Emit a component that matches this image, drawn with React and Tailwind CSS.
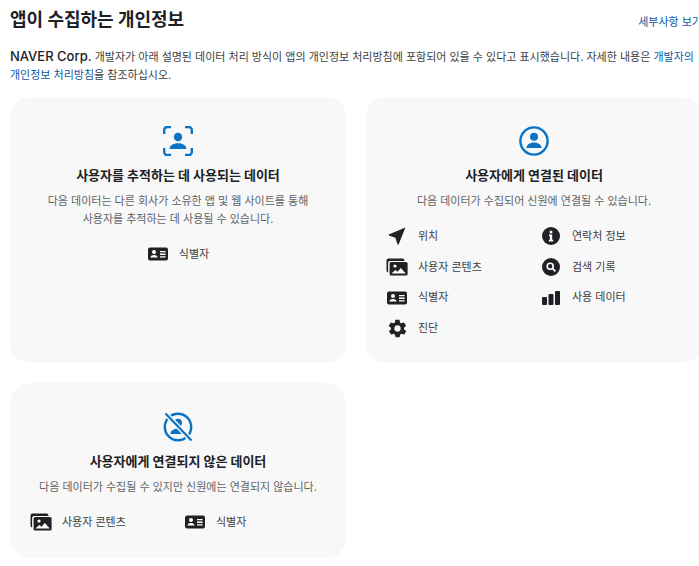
import React from 'react';

const ink = '#202124';
const blue = '#0b73c4';

function IdIcon() {
  return (
    <svg width="22" height="16" viewBox="0 0 22 16">
      <rect x="1" y="1.5" width="20" height="13" rx="2" fill={ink} />
      <circle cx="7" cy="6" r="2" fill="#fff" />
      <path d="M3.4 11.6c0-1.7 2-2.5 3.6-2.5s3.6.8 3.6 2.5z" fill="#fff" />
      <path d="M13 5h5.6v1.3H13zM13 7.6h5.6v1.3H13zM13 10.2h5.6v1.3H13z" fill="#fff" />
    </svg>
  );
}

function MediaIcon() {
  return (
    <svg width="22" height="18" viewBox="0 0 22 18">
      <path d="M2.5 0.5h14a2 2 0 0 1 2 2v.5H4a2 2 0 0 0-1.9 2v9.5A2 2 0 0 1 .5 12.500v-10a2 2 0 0 1 2-2z" fill={ink} />
      <rect x="3.6" y="4" width="18" height="13.6" rx="1.6" fill={ink} />
      <circle cx="9" cy="8" r="1.6" fill="#fff" />
      <path d="M5.4 15.6l4-3.6 2.2 1.8 3.2-3.8 5 5.6z" fill="#fff" />
    </svg>
  );
}

function NavIcon() {
  return (
    <svg width="18" height="18" viewBox="0 0 18 18">
      <path d="M17.4 0.6L0.8 7.6v1l6.6 2.2 2.2 6.6h1z" fill={ink} />
    </svg>
  );
}

function GearIcon() {
  return (
    <svg width="21" height="21" viewBox="0 0 24 24">
      <path
        d="M19.4 13c.1-.3.1-.7.1-1s0-.7-.1-1l2.100-1.600c.2-.2.3-.4.1-.7l-2-3.400c-.1-.2-.4-.3-.6-.2l-2.500 1c-.5-.4-1.100-.7-1.700-1l-.4-2.600c0-.3-.2-.4-.5-.4h-4c-.3 0-.5.2-.5.4l-.4 2.600c-.6.3-1.200.6-1.700 1l-2.500-1c-.2-.1-.5 0-.6.2l-2 3.400c-.1.3-.1.5.1.7L4.600 11c-.1.3-.1.7-.1 1s0 .7.1 1l-2.100 1.600c-.2.2-.3.4-.1.7l2 3.400c.1.2.4.3.6.2l2.500-1c.5.4 1.100.7 1.700 1l.4 2.600c0 .3.2.4.5.4h4c.3 0 .5-.2.5-.4l.4-2.600c.6-.3 1.200-.6 1.700-1l2.500 1c.2.1.5 0 .6-.2l2-3.400c.1-.3.1-.5-.1-.7zM12 15.600a3.600 3.600 0 1 1 0-7.200 3.600 3.600 0 0 1 0 7.200z"
        fill={ink}
      />
    </svg>
  );
}

function InfoIcon() {
  return (
    <svg width="18" height="18" viewBox="0 0 18 18">
      <circle cx="9" cy="9" r="9" fill={ink} />
      <circle cx="9" cy="5" r="1.5" fill="#fff" />
      <path d="M7 7.6h3.2v5.2h1v1.6H6.900v-1.600h1V9.200H7z" fill="#fff" />
    </svg>
  );
}

function SearchIcon() {
  return (
    <svg width="18" height="18" viewBox="0 0 18 18">
      <circle cx="9" cy="9" r="9" fill={ink} />
      <circle cx="8.2" cy="8.2" r="3" fill="none" stroke="#fff" strokeWidth="1.6" />
      <path d="M10.4 10.4l3 3" stroke="#fff" strokeWidth="1.8" />
    </svg>
  );
}

function BarsIcon() {
  return (
    <svg width="18" height="14" viewBox="0 0 18 14">
      <rect x="0" y="6" width="5" height="8" rx="1" fill={ink} />
      <rect x="6.5" y="3" width="5" height="11" rx="1" fill={ink} />
      <rect x="13" y="0" width="5" height="14" rx="1" fill={ink} />
    </svg>
  );
}

function TrackIcon() {
  return (
    <svg width="30" height="30" viewBox="0 0 30 30" fill="none">
      <path
        d="M1.2 8V4a3 3 0 0 1 3-3H8M22 1h3.800a3 3 0 0 1 3 3v4M28.800 22v4a3 3 0 0 1-3 3H22M8 29H4.200a3 3 0 0 1-3-3v-4"
        stroke={blue}
        strokeWidth="2.4"
      />
      <circle cx="15" cy="11" r="4.200" fill={blue} />
      <path d="M6.600 23c0-4.200 5-5.800 8.400-5.800s8.400 1.600 8.400 5.800z" fill={blue} />
    </svg>
  );
}

function LinkedIcon() {
  return (
    <svg width="30" height="30" viewBox="0 0 30 30" fill="none">
      <circle cx="15" cy="15" r="13.600" stroke={blue} strokeWidth="2.400" />
      <circle cx="15" cy="10.800" r="4" fill={blue} />
      <path d="M7.400 22c0-4 4.800-5.600 7.600-5.600s7.600 1.600 7.600 5.600z" fill={blue} />
    </svg>
  );
}

function UnlinkedIcon() {
  return (
    <svg width="30" height="30" viewBox="0 0 30 30" fill="none">
      <circle cx="15" cy="15" r="13.200" stroke={blue} strokeWidth="2.400" />
      <circle cx="15" cy="10.800" r="4" fill={blue} />
      <path d="M7.400 22c0-4 4.800-5.600 7.600-5.600s7.600 1.600 7.600 5.600z" fill={blue} />
      <path d="M3.500 2.500l24 25" stroke="#f8f8f8" strokeWidth="5" />
      <path d="M2.500 1.500l26 27" stroke={blue} strokeWidth="2.200" />
    </svg>
  );
}

function Item({ icon, label }) {
  return (
    <div className="flex items-center h-[30.67px]">
      <div className="w-[22px] flex justify-center shrink-0">{icon}</div>
      <span className="ml-[10px] text-[11px] text-[#3c4043] whitespace-nowrap">{label}</span>
    </div>
  );
}

function Card({ icon, title, desc, className, children }) {
  return (
    <div className={`bg-[#f8f8f8] rounded-[20px] w-[336px] flex flex-col items-center pt-[29px] ${className}`}>
      {icon}
      <h3 className="mt-[9px] text-[13px] leading-[20px] font-bold text-[#202124] whitespace-nowrap">{title}</h3>
      <p className="mt-[7px] text-[11px] leading-[18px] text-[#5f6368] text-center w-[284px] break-keep">{desc}</p>
      {children}
    </div>
  );
}

export default function App() {
  return (
    <div
      className="w-[699px] h-[566px] overflow-hidden bg-white pl-[10px]"
      style={{ fontFamily: 'Inter, "Noto Sans CJK KR", sans-serif' }}
    >
      <div className="w-[692px]">
        <div className="flex justify-between items-start h-[47px]">
          <h2 className="mt-[6px] text-[18px] leading-[28px] font-bold text-[#202124]">앱이 수집하는 개인정보</h2>
          <a className="mt-[14px] text-[11px] leading-[16px] text-[#0b57a4] whitespace-nowrap">세부사항 보기</a>
        </div>
        <p className="text-[11px] leading-[18px] text-[#3c4043]">
          <b className="font-medium text-[#202124] text-[13px]">NAVER Corp.</b> 개발자가 아래 설명된 데이터 처리 방식이 앱의 개인정보 처리방침에 포함되어 있을 수 있다고 표시했습니다. 자세한 내용은{' '}
          <a className="text-[#0b57a4]">개발자의 개인정보 처리방침</a>을 참조하십시오.
        </p>
      </div>
      <div className="mt-[13px] flex gap-x-[20px] w-[702px]">
        <Card
          className="h-[266px] shrink-0"
          icon={<TrackIcon />}
          title="사용자를 추적하는 데 사용되는 데이터"
          desc="다음 데이터는 다른 회사가 소유한 앱 및 웹 사이트를 통해 사용자를 추적하는 데 사용될 수 있습니다."
        >
          <div className="mt-[11px]">
            <Item icon={<IdIcon />} label="식별자" />
          </div>
        </Card>
        <Card
          className="h-[266px] shrink-0"
          icon={<LinkedIcon />}
          title="사용자에게 연결된 데이터"
          desc="다음 데이터가 수집되어 신원에 연결될 수 있습니다."
        >
          <div className="mt-[11px] w-full pl-[20px] grid grid-cols-[154px_1fr]">
            <Item icon={<NavIcon />} label="위치" />
            <Item icon={<InfoIcon />} label="연락처 정보" />
            <Item icon={<MediaIcon />} label="사용자 콘텐츠" />
            <Item icon={<SearchIcon />} label="검색 기록" />
            <Item icon={<IdIcon />} label="식별자" />
            <Item icon={<BarsIcon />} label="사용 데이터" />
            <Item icon={<GearIcon />} label="진단" />
          </div>
        </Card>
      </div>
      <Card
        className="mt-[20px] h-[175px]"
        icon={<UnlinkedIcon />}
        title="사용자에게 연결되지 않은 데이터"
        desc="다음 데이터가 수집될 수 있지만 신원에는 연결되지 않습니다."
      >
        <div className="mt-[11px] w-full pl-[20px] grid grid-cols-[154px_1fr]">
          <Item icon={<MediaIcon />} label="사용자 콘텐츠" />
          <Item icon={<IdIcon />} label="식별자" />
        </div>
      </Card>
    </div>
  );
}
